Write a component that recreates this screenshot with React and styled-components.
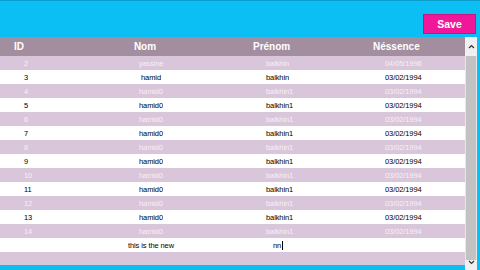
import React from "react";
import styled, { createGlobalStyle } from "styled-components";

const GlobalStyle = createGlobalStyle`
  html, body {
    margin: 0;
    padding: 0;
    background: #0bbef4;
    font-family: "Liberation Sans", Arial, sans-serif;
    -webkit-font-smoothing: antialiased;
  }
`;

const rows = [
  { id: 2, nom: "yassine", prenom: "balkhin", date: "04/05/1996" },
  { id: 3, nom: "hamid", prenom: "balkhin", date: "03/02/1994" },
  { id: 4, nom: "hamid0", prenom: "balkhin1", date: "03/02/1994" },
  { id: 5, nom: "hamid0", prenom: "balkhin1", date: "03/02/1994" },
  { id: 6, nom: "hamid0", prenom: "balkhin1", date: "03/02/1994" },
  { id: 7, nom: "hamid0", prenom: "balkhin1", date: "03/02/1994" },
  { id: 8, nom: "hamid0", prenom: "balkhin1", date: "03/02/1994" },
  { id: 9, nom: "hamid0", prenom: "balkhin1", date: "03/02/1994" },
  { id: 10, nom: "hamid0", prenom: "balkhin1", date: "03/02/1994" },
  { id: 11, nom: "hamid0", prenom: "balkhin1", date: "03/02/1994" },
  { id: 12, nom: "hamid0", prenom: "balkhin1", date: "03/02/1994" },
  { id: 13, nom: "hamid0", prenom: "balkhin1", date: "03/02/1994" },
  { id: 14, nom: "hamid0", prenom: "balkhin1", date: "03/02/1994" },
];

function App() {
  return (
    <>
      <GlobalStyle />
      <Window>
        <TopBar>
          <SaveButton>Save</SaveButton>
        </TopBar>
        <Body>
          <GridColumn>
            <Grid>
              <HeaderRow>
                <HeadCell $pad="14px">ID</HeadCell>
                <HeadCell $align="center">Nom</HeadCell>
                <HeadCell $pad="3px">Prénom</HeadCell>
                <HeadCell $pad="8px">Néssence</HeadCell>
              </HeaderRow>
              {rows.map((r, i) => (
                <Row key={r.id} $alt={i % 2 === 0}>
                  <Cell $pad="24px">{r.id}</Cell>
                  <Cell $align="center" $pad="12px">{r.nom}</Cell>
                  <Cell $pad="16px">{r.prenom}</Cell>
                  <Cell $pad="20px">{r.date}</Cell>
                </Row>
              ))}
              <Row>
                <Cell />
                <Cell $align="center" $pad="12px">this is the new</Cell>
                <Cell $pad="23px">
                  nn<Caret />
                </Cell>
                <Cell />
              </Row>
            </Grid>
          </GridColumn>
          <ScrollBar>
            <ArrowBox>
              <svg width="7" height="5" viewBox="0 0 7 5">
                <path d="M1 4 L3.5 1.5 L6 4" fill="none" stroke="#333" strokeWidth="1.2" />
              </svg>
            </ArrowBox>
            <Thumb />
            <ArrowBox $small>
              <svg width="7" height="5" viewBox="0 0 7 5">
                <path d="M1 1 L3.5 3.5 L6 1" fill="none" stroke="#333" strokeWidth="1.2" />
              </svg>
            </ArrowBox>
          </ScrollBar>
        </Body>
      </Window>
    </>
  );
}

export default App;

const Window = styled.div`
  width: 480px;
  height: 270px;
  display: flex;
  flex-direction: column;
  background: #0bbef4;
  border-top: 1px solid #0a9ccc;
  box-sizing: border-box;
  overflow: hidden;
`;

const TopBar = styled.div`
  height: 36px;
  display: flex;
  justify-content: flex-end;
  align-items: center;
  padding: 0 4px 0 0;
  box-sizing: border-box;
`;

const SaveButton = styled.button`
  width: 53px;
  height: 20px;
  margin-top: 9px;
  background: #f0179b;
  border: 1px solid #c8127f;
  color: #fff;
  font-family: "Liberation Sans", Arial, sans-serif;
  font-weight: bold;
  font-size: 10.5px;
  padding: 0;
`;

const Body = styled.div`
  flex: 1;
  display: flex;
  padding-right: 3px;
`;

const GridColumn = styled.div`
  flex: 1;
  display: flex;
  flex-direction: column;
  padding-bottom: 5px;
`;

const Grid = styled.div`
  flex: 1;
  background: #dac6da;
  display: flex;
  flex-direction: column;
`;

const HeaderRow = styled.div`
  display: grid;
  grid-template-columns: 40px 210px 115px 100px;
  height: 19px;
  background: #a38e9f;
  align-items: center;
`;

const HeadCell = styled.div`
  color: #fff;
  font-weight: bold;
  font-size: 10px;
  text-align: ${(p) => p.$align || "left"};
  padding-left: ${(p) => p.$pad || "0"};
`;

const Row = styled.div`
  display: grid;
  grid-template-columns: 40px 210px 115px 100px;
  height: 14px;
  align-items: center;
  background: ${(p) => (p.$alt ? "#dac6da" : "#ffffff")};
  color: ${(p) => (p.$alt ? "#f6f0f6" : "#000000")};
`;

const Cell = styled.div`
  font-size: 7.5px;
  letter-spacing: -0.1px;
  padding-left: ${(p) => p.$pad || "0"};
  white-space: nowrap;
  display: flex;
  align-items: center;
  justify-content: ${(p) => (p.$align === "center" ? "center" : "flex-start")};
  opacity: 0.999;
`;

const Caret = styled.span`
  display: inline-block;
  width: 1px;
  height: 9px;
  background: #000;
  margin-left: 1px;
`;

const ScrollBar = styled.div`
  width: 12px;
  display: flex;
  flex-direction: column;
  background: #e8e8e8;
`;

const ArrowBox = styled.div`
  height: ${(p) => (p.$small ? "10px" : "19px")};
  display: flex;
  align-items: ${(p) => (p.$small ? "flex-start" : "center")};
  justify-content: center;
  background: #f0f0f0;
`;

const Thumb = styled.div`
  flex: 1;
  margin: 0 1px;
  background: #c2c2c2;
`;
